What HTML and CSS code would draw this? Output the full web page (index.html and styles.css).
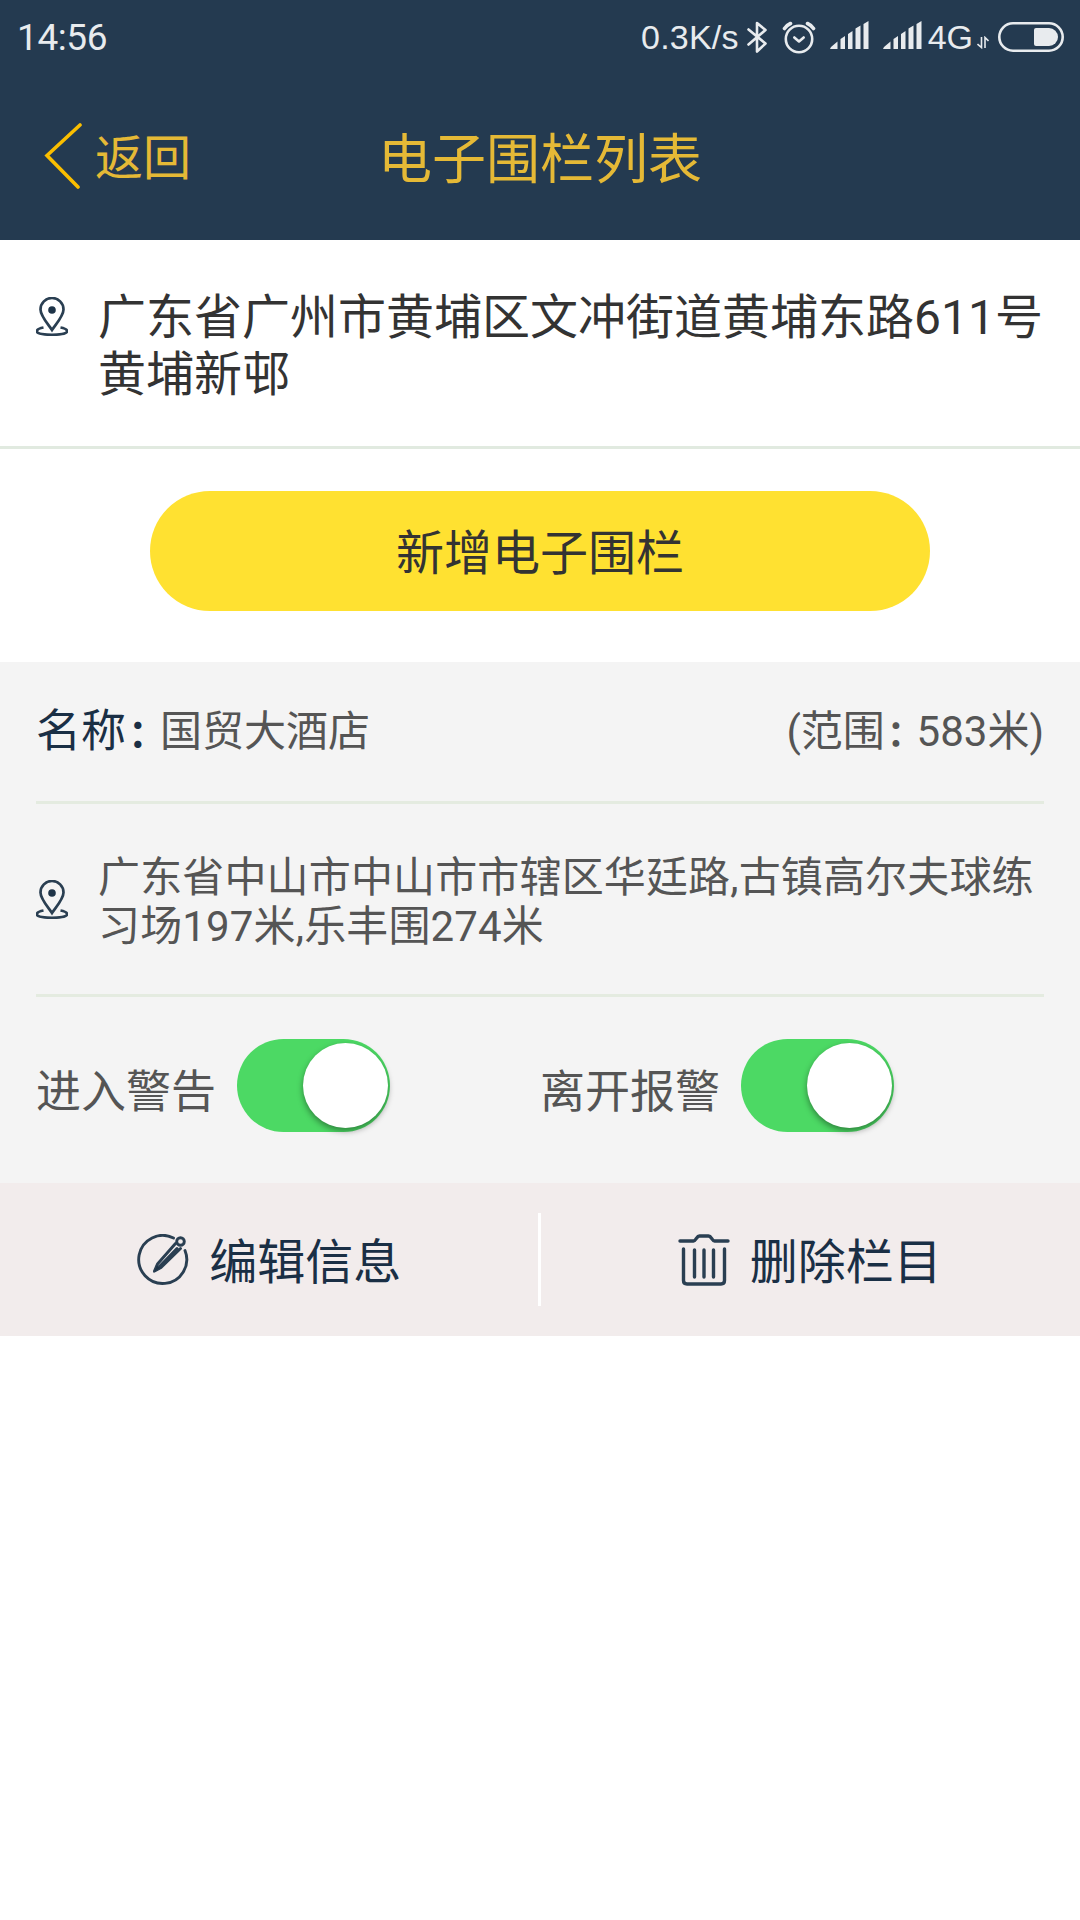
FILE: index.html
```html
<!DOCTYPE html>
<html lang="zh-CN">
<head>
    <meta charset="UTF-8">
    <meta name="viewport" content="width=device-width, initial-scale=1.0">
    <title>电子围栏列表</title>
    <link rel="stylesheet" href="styles.css">
</head>
<body>

    <header class="header">
        <div class="status-bar">
            <span class="time">14:56</span>
            <div class="status-icons">
                <span class="speed">0.3K/s</span>
                <svg class="bluetooth" width="22" height="34" viewBox="0 0 22 34" fill="none" stroke="currentColor" stroke-width="2.6" stroke-linecap="round" stroke-linejoin="round"><path d="M2.500 9.500L19.500 23.500L11 31.500V3L19.500 10L2.500 24.500"/></svg>
                <svg class="alarm" width="34" height="34" viewBox="0 0 34 34" fill="none" stroke="currentColor" stroke-width="2.600" stroke-linecap="round" stroke-linejoin="round"><circle cx="17" cy="19" r="13.200"/><path d="M12.300 17.500L17 21.500L21.700 17.500"/><path stroke-width="3.600" d="M2.500 8.500Q5 5 8.500 3.500M31.500 8.500Q29 5 25.500 3.500"/></svg>
                <svg class="signal" width="39" height="29" viewBox="0 0 39 29" fill="currentColor"><path d="M0 28L1 26L7.500 20.500V28ZM10.500 18L15 15V28H10.500ZM18 13L22.500 10V28H18ZM25.500 7.500L30.500 4.500V28H25.500ZM33.500 3L38.500 0V28H33.500Z"/></svg>
                <svg class="signal second" width="39" height="29" viewBox="0 0 39 29" fill="currentColor"><path d="M0 28L1 26L7.500 20.500V28ZM10.500 18L15 15V28H10.500ZM18 13L22.500 10V28H18ZM25.500 7.500L30.500 4.500V28H25.500ZM33.500 3L38.500 0V28H33.500Z"/></svg>
                <span class="network">4G</span>
                <svg class="data" width="12" height="13" viewBox="0 0 12 13" fill="none" stroke="currentColor" stroke-width="1.600"><path d="M0.500 8L4.500 11.500V1M8 12V1.500L11.500 5"/></svg>
                <svg class="battery" width="66" height="30" viewBox="0 0 66 30"><rect x="1.300" y="1.300" width="63.400" height="27.400" rx="13.700" fill="none" stroke="currentColor" stroke-width="2.600"/><path fill="currentColor" d="M38 6H51A9 9 0 0 1 51 24H38Q36 24 36 22V8Q36 6 38 6Z"/></svg>
            </div>
        </div>
        <div class="nav-bar">
            <a class="back" href="#">
                <svg class="back-icon" width="40" height="66" viewBox="0 0 40 66" fill="none" stroke="#fabe00" stroke-width="3.600" stroke-linecap="round"><path d="M36 2L3 32.500L34 64"/></svg>
                <span>返回</span>
            </a>
            <h1>电子围栏列表</h1>
        </div>
    </header>

    <!-- 当前位置 -->
    <section class="current">
        <svg class="pin" width="32" height="39" viewBox="0 0 32 39" fill="none" stroke="#2a3f52" stroke-width="2.700"><path d="M16 33C12 27 4.500 19 4.500 12.500A11.500 11.500 0 0 1 27.500 12.500C27.500 19 20 27 16 33Z"/><circle cx="16" cy="13" r="3.800" fill="#1e3448" stroke="none"/><path d="M7.500 30.500C-1 32 -1 36 6 37C12 38 20 38 26 37C33 36 33 32 24.500 30.500"/></svg>
        <p>广东省广州市黄埔区文冲街道黄埔东路611号黄埔新邨</p>
    </section>

    <div class="add-row">
        <button class="add-btn">新增电子围栏</button>
    </div>

    <!-- 围栏信息 -->
    <section class="fence">
        <div class="fence-name">
            <span class="label">名称<span class="colon">：</span></span>
            <span class="name">国贸大酒店</span>
            <span class="range">(范围<span class="colon">：</span>583米)</span>
        </div>
        <div class="fence-address">
            <svg class="pin" width="32" height="39" viewBox="0 0 32 39" fill="none" stroke="#2a3f52" stroke-width="2.700"><path d="M16 33C12 27 4.500 19 4.500 12.500A11.500 11.500 0 0 1 27.500 12.500C27.500 19 20 27 16 33Z"/><circle cx="16" cy="13" r="3.800" fill="#1e3448" stroke="none"/><path d="M7.500 30.500C-1 32 -1 36 6 37C12 38 20 38 26 37C33 36 33 32 24.500 30.500"/></svg>
            <p>广东省中山市中山市市辖区华廷路,古镇高尔夫球练习场197米,乐丰围274米</p>
        </div>
        <div class="fence-alarm">
            <div class="alarm-item">
                <span>进入警告</span>
                <div class="switch"><div class="handle"></div></div>
            </div>
            <div class="alarm-item">
                <span>离开报警</span>
                <div class="switch"><div class="handle"></div></div>
            </div>
        </div>
    </section>

    <div class="actions">
        <a class="action" href="#">
            <svg width="52" height="52" viewBox="0 0 52 52" fill="none" stroke="#2a3f52" stroke-width="2.900" stroke-linecap="round" stroke-linejoin="round"><path d="M36.500 4A24 24 0 1 0 48 16.500"/><circle cx="43.500" cy="7.500" r="3.800"/><path d="M38.500 9.500L20.500 30L17.500 37L24 33.500L43.500 14.500M40 14.500L23 32"/><path fill="#1e3448" stroke-width="1" d="M20 31L24 34L17 38Z"/></svg>
            <span>编辑信息</span>
        </a>
        <i class="separator"></i>
        <a class="action last" href="#">
            <svg width="52" height="52" viewBox="0 0 52 52" fill="none" stroke="#2a3f52" stroke-width="3.400" stroke-linecap="round" stroke-linejoin="round"><path d="M2 7H15.500C18 7 18.500 2 21.500 2H30.500C33.500 2 34 7 36.500 7H50"/><path d="M5.500 15V46.500Q5.500 50 9 50H43Q46.500 50 46.500 46.500V15M16.500 16V43M26 16V43M35.500 16V43"/></svg>
            <span>删除栏目</span>
        </a>
    </div>

</body>
</html>
```
FILE: styles.css
```css
* {
    box-sizing: border-box;
}
body {
    margin: 0;
    background-color: #fff;
    color: #333;
    font-family: Roboto, 'Noto Sans CJK SC', sans-serif;
}
p, h1 {
    margin: 0;
    font-weight: normal;
}
a {
    color: inherit;
    text-decoration: none;
}
.header {
    height: 240px;
    background-color: #243a50;
}
.status-bar {
    display: flex;
    justify-content: space-between;
    align-items: center;
    height: 74px;
    padding: 0 16px 0 17px;
    color: #e8ebee;
}
.time {
    padding-top: 1px;
    font-size: 37px;
    letter-spacing: -0.4px;
}
.status-icons {
    display: flex;
    align-items: center;
    font-family: 'Liberation Sans', Arial, sans-serif;
    font-size: 34px;
}
.speed {
    letter-spacing: 0.2px;
}
.bluetooth {
    margin-left: 7px;
}
.alarm {
    margin-left: 14px;
}
.signal {
    margin: 0 0 4px 14px;
}
.signal.second {
    margin-right: 6px;
}
.data {
    margin: 10px 9px 0 4px;
}
.nav-bar {
    display: grid;
    grid-template-columns: 1fr auto 1fr;
    align-items: center;
    height: 166px;
    color: #e5b936;
}
.nav-bar h1 {
    padding-top: 7px;
    font-size: 54px;
    line-height: 80px;
}
.back {
    display: flex;
    align-items: center;
    gap: 11px;
    padding-left: 44px;
    font-size: 48px;
    line-height: 80px;
}
.back-icon {
    margin-bottom: 2px;
}
.back span {
    padding-top: 4px;
}
.current {
    display: flex;
    align-items: flex-start;
    height: 209px;
    padding: 49px 36px 0;
    border-bottom: 3px solid #e1eae0;
    font-size: 48px;
    line-height: 57px;
}
.pin {
    flex: none;
    margin-right: 30px;
}
.current .pin {
    margin-top: 8px;
}
.add-row {
    height: 213px;
    padding: 42px 150px;
}
.add-btn {
    display: block;
    width: 100%;
    height: 120px;
    padding: 0 0 5px;
    border: none;
    border-radius: 60px;
    background-color: #ffe131;
    color: #333;
    font-family: inherit;
    font-size: 48px;
}
.fence {
    padding: 0 36px;
    background-color: #f4f4f4;
    color: #555;
}
.fence-name {
    display: flex;
    align-items: center;
    height: 142px;
    padding-bottom: 8px;
    border-bottom: 3px solid #e4ebe0;
    font-size: 42px;
}
.label {
    color: #1a2f45;
    font-size: 45px;
}
/* 冒号比全角略窄 */
.colon {
    margin: 0 0.33em 0 0.06em;
    font-size: 0.85em;
    font-weight: bold;
    font-feature-settings: 'halt';
}
.range {
    margin-left: auto;
}
.fence-address {
    display: flex;
    align-items: center;
    height: 193px;
    border-bottom: 3px solid #e4ebe0;
    font-size: 42px;
    line-height: 49px;
    letter-spacing: 0.15px;
}
.fence-address p {
    padding-top: 5px;
}
.fence-alarm {
    display: flex;
    height: 186px;
    padding-top: 42px;
}
.alarm-item {
    display: flex;
    gap: 21px;
    width: 50%;
    font-size: 45px;
    line-height: 107px;
}
.switch {
    width: 153px;
    height: 93px;
    padding: 4px 3px 0 66px;
    border-radius: 47px;
    background-color: #4cd964;
}
.handle {
    width: 85px;
    height: 85px;
    border-radius: 50%;
    background-color: #fff;
    box-shadow: 0 3px 6px rgba(0, 0, 0, 0.4);
}
.actions {
    display: flex;
    align-items: center;
    height: 153px;
    background-color: #f2ecec;
    color: #1a2f45;
    font-size: 48px;
}
.action {
    display: flex;
    flex: 1;
    justify-content: center;
    align-items: center;
    gap: 20px;
}
.action span {
    padding-bottom: 4px;
}
.action.last {
    padding-right: 1px;
}
.separator {
    width: 3px;
    height: 93px;
    margin-left: -1px;
    background-color: #fff;
}
```
